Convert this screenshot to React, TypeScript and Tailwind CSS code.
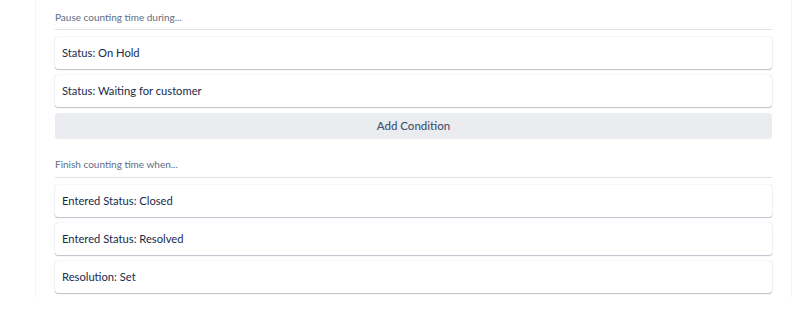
import React from "react";

const pauseItems = ["Status: On Hold", "Status: Waiting for customer"];
const finishItems = ["Entered Status: Closed", "Entered Status: Resolved", "Resolution: Set"];

const SectionTitle: React.FC<{ text: string; className?: string }> = ({ text, className }) => (
  <div className={`border-b border-[#dfe1e6] text-[10px] leading-[14px] text-[#5e6c84] ${className ?? ""}`}>{text}</div>
);

const ConditionCard: React.FC<{ label: string }> = ({ label }) => (
  <div className="flex h-8 items-center rounded-[3px] bg-white px-[7px] text-[11.2px] text-[#172b4d] shadow-[0_1px_1px_rgba(9,30,66,0.25),0_0_1px_rgba(9,30,66,0.31)]">
    {label}
  </div>
);

export default function App() {
  return (
    <div className="h-[317px] w-[794px] bg-white font-['Lato','Noto_Sans',sans-serif]">
      <div className="ml-[35px] w-[757px] border-x border-[#f4f5f7] px-[19px] pt-[10px] pb-[4px]">
        <SectionTitle text="Pause counting time during..." className="pb-[5px]" />
        <div className="mt-[7px] flex flex-col gap-[6px]">
          {pauseItems.map((item) => (
            <ConditionCard key={item} label={item} />
          ))}
          <button className="h-[26px] w-full rounded-[3px] bg-[#ebecf0] text-[11.5px] font-medium text-[#42526e]">
            Add Condition
          </button>
        </div>
        <SectionTitle text="Finish counting time when..." className="mt-[18px] pb-[6px]" />
        <div className="mt-[7px] flex flex-col gap-[6px]">
          {finishItems.map((item) => (
            <ConditionCard key={item} label={item} />
          ))}
        </div>
      </div>
    </div>
  );
}
